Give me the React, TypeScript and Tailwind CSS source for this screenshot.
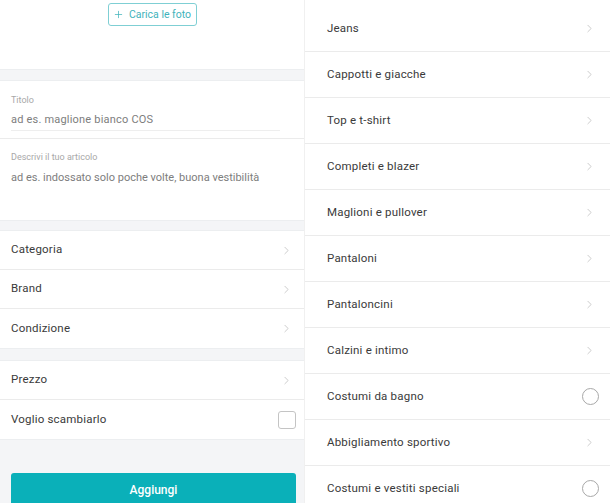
import { ChevronRight, Plus } from 'lucide-react';

const categories: { name: string; kind: 'chevron' | 'radio' }[] = [
  { name: 'Jeans', kind: 'chevron' },
  { name: 'Cappotti e giacche', kind: 'chevron' },
  { name: 'Top e t-shirt', kind: 'chevron' },
  { name: 'Completi e blazer', kind: 'chevron' },
  { name: 'Maglioni e pullover', kind: 'chevron' },
  { name: 'Pantaloni', kind: 'chevron' },
  { name: 'Pantaloncini', kind: 'chevron' },
  { name: 'Calzini e intimo', kind: 'chevron' },
  { name: 'Costumi da bagno', kind: 'radio' },
  { name: 'Abbigliamento sportivo', kind: 'chevron' },
  { name: 'Costumi e vestiti speciali', kind: 'radio' },
];

function Chevron() {
  return <ChevronRight className="w-[13px] h-[13px] text-[#b8b8b8]" strokeWidth={1.3} />;
}

function Row({ label, last, children }: { label: string; last?: boolean; children?: React.ReactNode }) {
  return (
    <div className={`h-[39px] shrink-0 flex items-center justify-between pl-[11px] pr-[11px] ${last ? '' : 'border-b border-[#ebebeb]'}`}>
      <span className="text-[11.5px] text-[#3a3a3a] tracking-[0.2px]">{label}</span>
      {children ?? <Chevron />}
    </div>
  );
}

function Band({ h }: { h: string }) {
  return <div className={`${h} shrink-0 bg-[#f4f5f7] border-y border-[#eceef0]`} />;
}

export default function App() {
  return (
    <div className="w-[610px] h-[503px] overflow-hidden flex bg-white" style={{ fontFamily: 'Roboto, "Noto Sans", sans-serif' }}>
      {/* form */}
      <div className="w-[304px] shrink-0 flex flex-col bg-[#f4f5f7]">
        <div className="h-[69px] shrink-0 bg-white flex justify-center pt-[3px]">
          <button className="h-[23px] w-[89px] border border-[#7fcfd4] rounded-[3px] flex items-center justify-center gap-[5px] text-[10.5px] text-[#3fb3bb]">
            <Plus className="w-[11px] h-[11px]" strokeWidth={1.6} />
            Carica le foto
          </button>
        </div>
        <Band h="h-[12px]" />
        <div className="bg-white shrink-0">
          <div className="h-[58px] border-b border-[#ebebeb] pl-[11px] pr-[24px] pt-[13px]">
            <div className="text-[9px] text-[#a8a8a8] leading-[12px]">Titolo</div>
            <div className="mt-[7px] text-[11px] text-[#7d7d7d] leading-[14px] pb-[3px] border-b border-[#eeeeee] tracking-[0.2px]">
              ad es. maglione bianco COS
            </div>
          </div>
          <div className="h-[81px] pl-[11px] pt-[12px]">
            <div className="text-[9px] text-[#a8a8a8] leading-[12px]">Descrivi il tuo articolo</div>
            <div className="mt-[8px] text-[11px] text-[#7d7d7d] leading-[14px]">
              ad es. indossato solo poche volte, buona vestibilità
            </div>
          </div>
        </div>
        <Band h="h-[11px]" />
        <div className="bg-white shrink-0">
          <Row label="Categoria" />
          <Row label="Brand" />
          <Row label="Condizione" last />
        </div>
        <Band h="h-[13px]" />
        <div className="bg-white shrink-0">
          <Row label="Prezzo" />
          <Row label="Voglio scambiarlo" last>
            <span className="w-[18px] h-[18px] border border-[#c4c4c4] rounded-[3px] mr-[-3px]" />
          </Row>
        </div>
        <div className="flex-1 pl-[11px] pr-[8px] pt-[33px] border-t border-[#eceef0]">
          <button className="w-full h-[34px] rounded-[3px] bg-[#0ab0b9] text-white text-[12px] font-medium">
            Aggiungi
          </button>
        </div>
      </div>

      {/* category list */}
      <div className="flex-1 pt-[6px] border-l border-[#f0f0f0]">
        {categories.map((c) => (
          <div key={c.name} className="h-[46px] flex items-center justify-between pl-[22px] pr-[14px] border-b border-[#ebebeb]">
            <span className="text-[11.5px] text-[#3a3a3a] tracking-[0.2px]">{c.name}</span>
            {c.kind === 'radio' ? (
              <span className="w-[17px] h-[17px] rounded-full border border-[#a8a8a8] mr-[-3px]" />
            ) : (
              <Chevron />
            )}
          </div>
        ))}
      </div>
    </div>
  );
}
